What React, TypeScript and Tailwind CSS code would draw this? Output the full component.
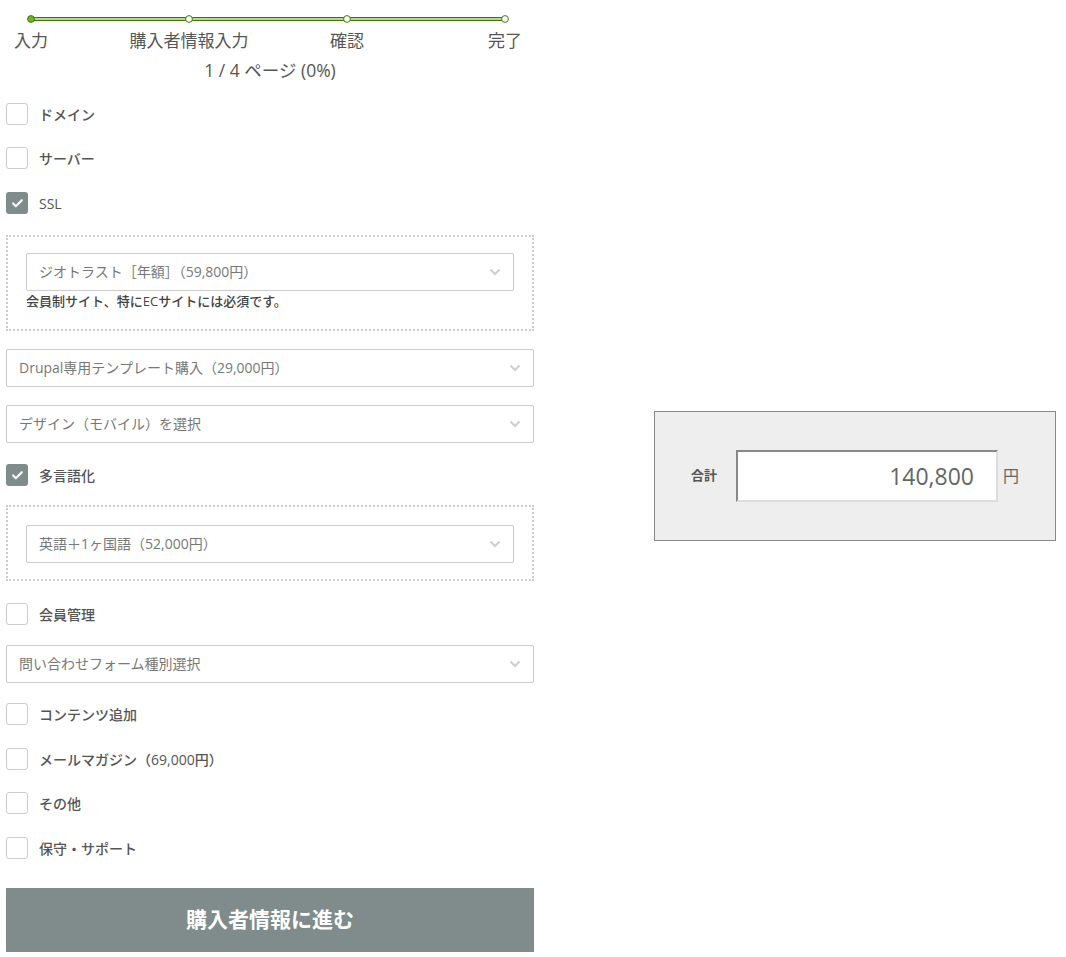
import { Check } from 'lucide-react';

const font = { fontFamily: '"Open Sans", "Noto Sans CJK JP", sans-serif' };

const steps = ['入力', '購入者情報入力', '確認', '完了'];

function ProgressBar() {
  return (
    <div className="w-[528px]">
      <div className="mt-[15px] h-[8px] pl-[21px] pr-[25px]">
        <svg width="482" height="8" viewBox="0 0 482 8">
          <rect x="4" y="2.5" width="474" height="3" fill="#b9d39c" />
          <line x1="4" y1="2.5" x2="478" y2="2.5" stroke="#3d7a04" strokeWidth="1" />
          <line x1="4" y1="5.5" x2="478" y2="5.5" stroke="#3d7a04" strokeWidth="1" />
          <circle cx="4" cy="4" r="3.4" fill="#6cb52c" stroke="#3d7a04" strokeWidth="1" />
          <circle cx="162" cy="4" r="3.4" fill="#fff" stroke="#3d7a04" strokeWidth="1" />
          <circle cx="320" cy="4" r="3.4" fill="#fff" stroke="#3d7a04" strokeWidth="1" />
          <circle cx="478" cy="4" r="3.4" fill="#fff" stroke="#3d7a04" strokeWidth="1" />
        </svg>
      </div>
      <div className="mt-[6px] flex h-[24px] justify-between pl-[25px] pr-[29px]">
        {steps.map((s) => (
          <div key={s} className="flex w-0 justify-center">
            <span className="whitespace-nowrap text-[17px] leading-[24px] text-[#555]">{s}</span>
          </div>
        ))}
      </div>
      <p className="mt-[5px] text-center text-[17.5px] leading-[24px] text-[#555]">1 / 4 ページ (0%)</p>
    </div>
  );
}

function CheckRow({ label, checked = false, className = '' }: { label: string; checked?: boolean; className?: string }) {
  return (
    <label className={`flex h-[22px] items-center gap-[11px] ${className}`}>
      <span
        className={`flex h-[22px] w-[22px] items-center justify-center rounded-[3px] ${
          checked ? 'bg-[#7f8c8b]' : 'border border-[#cccccc] bg-white'
        }`}
      >
        {checked && <Check size={13} strokeWidth={4} className="text-white" />}
      </span>
      <span className="text-[14px] font-medium text-[#555]">{label}</span>
    </label>
  );
}

function Select({ label, className = '' }: { label: string; className?: string }) {
  return (
    <div
      className={`flex h-[38px] items-center justify-between rounded-[2px] border border-[#cccccc] bg-white pl-[12px] pr-[12px] ${className}`}
    >
      <span className="text-[14px] leading-[20px] text-[#777]">{label}</span>
      <svg width="12" height="8" viewBox="0 0 12 8">
        <path d="M1.5 1.5 L6 6 L10.5 1.5" fill="none" stroke="#cfcfcf" strokeWidth="2" />
      </svg>
    </div>
  );
}

function Total() {
  return (
    <div className="ml-[120px] flex h-[130px] w-[402px] items-center border border-[#888] bg-[#eeeeee] pl-[36px]">
      <span className="w-[45px] text-[13px] font-bold text-[#555]">合計</span>
      <div className="flex h-[52px] w-[262px] items-center justify-end border-2 border-t-[#888] border-l-[#888] border-b-[#dddddd] border-r-[#dddddd] bg-white pr-[22px]">
        <span className="text-[23px] text-[#666]">140,800</span>
      </div>
      <span className="ml-[5px] text-[16px] text-[#666]">円</span>
    </div>
  );
}

export default function App() {
  return (
    <div className="flex h-[957px] items-start bg-white" style={font}>
      <div className="flex items-center">
        <div className="ml-[6px] flex w-[528px] flex-col">
          <ProgressBar />
          <CheckRow label="ドメイン" className="mt-[21px]" />
          <CheckRow label="サーバー" className="mt-[22px]" />
          <CheckRow label="SSL" checked className="mt-[23px]" />
          <div className="mt-[21px] h-[96px] border-2 border-dotted border-[#cccccc] px-[18px] pt-[16px]">
            <Select label="ジオトラスト［年額］（59,800円）" />
            <p className="mt-[1px] text-[13px] font-medium leading-[18px] text-[#444]">
              会員制サイト、特にECサイトには必須です。
            </p>
          </div>
          <Select label="Drupal専用テンプレート購入（29,000円）" className="mt-[18px]" />
          <Select label="デザイン（モバイル）を選択" className="mt-[18px]" />
          <CheckRow label="多言語化" checked className="mt-[21px]" />
          <div className="mt-[19px] h-[76px] border-2 border-dotted border-[#cccccc] px-[18px] pt-[18px]">
            <Select label="英語＋1ヶ国語（52,000円）" />
          </div>
          <CheckRow label="会員管理" className="mt-[22px]" />
          <Select label="問い合わせフォーム種別選択" className="mt-[20px]" />
          <CheckRow label="コンテンツ追加" className="mt-[20px]" />
          <CheckRow label="メールマガジン（69,000円）" className="mt-[23px]" />
          <CheckRow label="その他" className="mt-[22px]" />
          <CheckRow label="保守・サポート" className="mt-[23px]" />
          <button className="mt-[29px] h-[64px] w-full bg-[#7f8c8b] text-[21px] font-bold text-white">
            購入者情報に進む
          </button>
        </div>
        <Total />
      </div>
    </div>
  );
}
